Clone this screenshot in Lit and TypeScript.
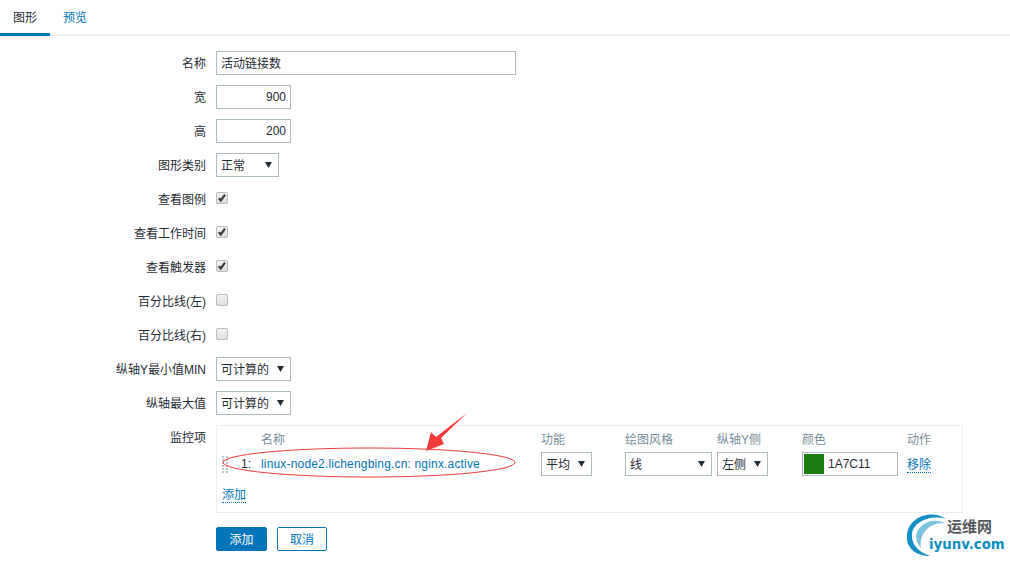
import { LitElement, html, css } from "lit";
import { customElement } from "lit/decorators.js";

const caret = html`<svg class="caret" width="7" height="6" viewBox="0 0 7 6"><path d="M0 0h7L3.5 6z" fill="#1f2c33"/></svg>`;

@customElement("app-root")
export class AppRoot extends LitElement {
  static styles = css`
    :host { display: block; width: 1010px; height: 561px; position: relative; overflow: hidden; background: #fff;
      font: 12px/14px Arial, "Liberation Sans", "Noto Sans CJK SC", sans-serif; color: #1f2c33; }
    .tabs { display: flex; height: 36px; box-sizing: border-box; border-bottom: 2px solid #ebeeef; }
    .tab { width: 50px; height: 36px; box-sizing: border-box; padding-top: 11px; text-align: center; }
    .tab.on { border-bottom: 3px solid #0275b8; }
    .tab.link { color: #0275b8; width: 48px; margin-left: 1px; }
    form { display: grid; grid-template-columns: 206px 1fr; column-gap: 10px; row-gap: 10px; padding-top: 15px; }
    .l { text-align: right; height: 24px; line-height: 26px; }
    .l.top { height: 14px; line-height: 26px; }
    .c { height: 24px; display: flex; align-items: center; }
    .inp, .sel { height: 24px; box-sizing: border-box; border: 1px solid #acbbc2; background: #fff; display: flex; align-items: center; padding: 0 4px; }
    .inp.cjk { padding-top: 2px; }
    .sel { justify-content: space-between; padding: 2px 6px 0 4px; }
    .w300 { width: 300px; } .w75 { width: 75px; } .right { justify-content: flex-end; } .w63 { width: 63px; }
    .w51 { width: 51px; } .w87 { width: 87px; }
    .caret { flex: none; margin-top: -3px; }
    .cb { width: 12px; height: 12px; box-sizing: border-box; border: 1px solid #b9b9b9; border-radius: 2px; background: linear-gradient(#f4f4f4,#dfdfdf); margin-top: -2px; display: block; position: relative; }
    .cb svg { display: block; position: absolute; left: 0; top: 0; }
    .box { width: 747px; height: 88px; box-sizing: border-box; border: 1px solid #ebeeef; padding: 7px 0 0 5px; }
    .hd, .row { display: grid; grid-template-columns: 12px 7px 20px 280px 84px 92px 85px 105px 1fr; align-items: center; }
    .hd { height: 14px; color: #768d99; }
    .row { height: 24px; margin-top: 5px; }
    .drag { width: 6px; height: 18px; display: grid; grid-template-columns: 2px 2px; gap: 1px 2px; align-content: center; }
    .drag i { background: #b8c2c6; width: 2px; height: 2px; display: block; }
    .blue { color: #0275b8; letter-spacing: .17px; }
    .u { color: #0275b8; border-bottom: 1px dotted #0275b8; display: inline-block; line-height: 14px; }
    .act { padding-top: 2px; }
    .color { width: 96px; height: 24px; box-sizing: border-box; border: 1px solid #acbbc2; padding: 1px; display: flex; align-items: center; gap: 4px; }
    .sw { width: 20px; height: 20px; background: #1a7c11; }
    .add { margin-top: 12px; }
    .btns { display: flex; gap: 10px; margin-top: 4px; }
    .b { height: 24px; box-sizing: border-box; border-radius: 2px; border: 1px solid #0275b8; display: flex; align-items: center; justify-content: center; padding-top: 1px; color: #0275b8; width: 50px; }
    .b.p { width: 51px; background: #0275b8; color: #fff; }
    .note { position: absolute; left: 0; top: 0; pointer-events: none; }
    .logo { position: absolute; left: 906px; top: 513px; width: 104px; height: 48px; }
    .logo .t1 { position: absolute; left: 41px; top: 5px; font-size: 15px; line-height: 18px; font-weight: 700; color: #55595c; white-space: nowrap; }
    .logo .t2 { position: absolute; left: 23px; top: 23px; line-height: 18px; font-weight: 700; color: #0d8dc4; white-space: nowrap; font-family: "DejaVu Sans", sans-serif; font-size: 13.3px; }
    .logo svg { position: absolute; left: 0; top: 0; }
  `;

  private cb(on: boolean) {
    return html`<span class="cb">${on ? html`<svg width="10" height="10" viewBox="0 0 10 10"><path d="M1.8 5.2l2 2.2L8 1.6" fill="none" stroke="#3a3a3a" stroke-width="2.2"/></svg>` : ""}</span>`;
  }

  render() {
    const checks: [string, boolean][] = [["查看图例", true], ["查看工作时间", true], ["查看触发器", true], ["百分比线(左)", false], ["百分比线(右)", false]];
    return html`
      <div class="tabs"><div class="tab on">图形</div><div class="tab link">预览</div></div>
      <form>
        <div class="l">名称</div><div class="c"><div class="inp cjk w300">活动链接数</div></div>
        <div class="l">宽</div><div class="c"><div class="inp w75 right">900</div></div>
        <div class="l">高</div><div class="c"><div class="inp w75 right">200</div></div>
        <div class="l">图形类别</div><div class="c"><div class="sel w63">正常${caret}</div></div>
        ${checks.map(([t, on]) => html`<div class="l">${t}</div><div class="c">${this.cb(on)}</div>`)}
        <div class="l">纵轴Y最小值MIN</div><div class="c"><div class="sel w75">可计算的${caret}</div></div>
        <div class="l">纵轴最大值</div><div class="c"><div class="sel w75">可计算的${caret}</div></div>
        <div class="l top">监控项</div>
        <div class="box">
          <div class="hd"><span></span><span></span><span></span><span>名称</span><span>功能</span><span>绘图风格</span><span>纵轴Y侧</span><span>颜色</span><span>动作</span></div>
          <div class="row">
            <div class="drag">${[1,2,3,4,5,6,7,8,9,10,11,12].map(() => html`<i></i>`)}</div>
            <span></span>
            <span>1:</span>
            <span class="blue">linux-node2.lichengbing.cn: nginx.active</span>
            <div class="sel w51">平均${caret}</div>
            <div class="sel w87">线${caret}</div>
            <div class="sel w51">左侧${caret}</div>
            <div class="color"><span class="sw"></span><span>1A7C11</span></div>
            <span class="act"><a class="u">移除</a></span>
          </div>
          <div class="add"><a class="u">添加</a></div>
        </div>
        <span></span>
        <div class="btns"><div class="b p">添加</div><div class="b">取消</div></div>
      </form>
      <svg class="note" width="1010" height="561" viewBox="0 0 1010 561">
        <ellipse cx="369" cy="462.5" rx="146" ry="14.5" fill="none" stroke="#ee3b3b" stroke-width="1"/>
        <path d="M467 413L441 438L444 444L426 451L431 432L436 437Z" fill="#f23a3a"/>
      </svg>
      <div class="logo">
        <svg width="104" height="48" viewBox="906 513 104 48">
          <path d="M946 519C930 508 906 518 907 538C907 548 916 556 930 556C918 552 911 544 912 534C913 522 930 514 946 519Z" fill="#1590c7"/>
          <path d="M945 523C932 517 918 524 916 536C916 541 918 545 921 548C919 535 928 522 945 523Z" fill="#7cc3e2"/>
        </svg>
        <span class="t1">运维网</span>
        <span class="t2">iyunv.com</span>
      </div>
    `;
  }
}
